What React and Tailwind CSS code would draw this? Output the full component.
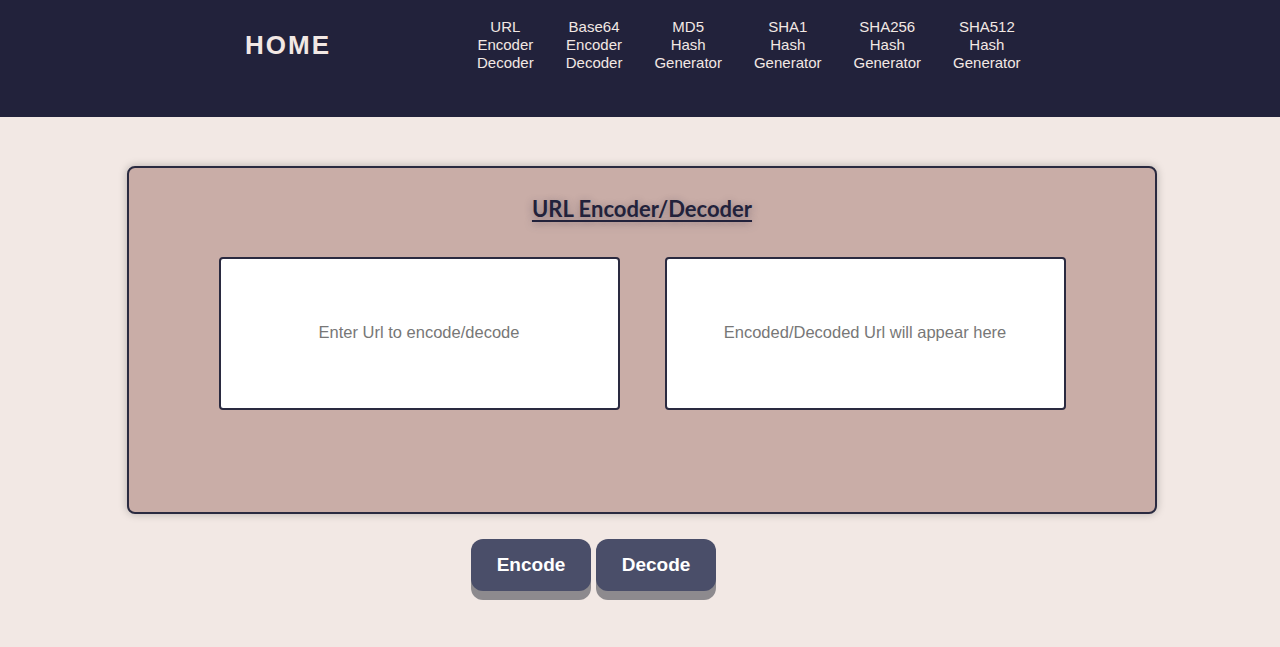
import { useState } from "react";

const links = [
  ["URL", "Encoder", "Decoder"],
  ["Base64", "Encoder", "Decoder"],
  ["MD5", "Hash", "Generator"],
  ["SHA1", "Hash", "Generator"],
  ["SHA256", "Hash", "Generator"],
  ["SHA512", "Hash", "Generator"],
];

export default function App() {
  const [input, setInput] = useState("");
  const [output, setOutput] = useState("");

  const encode = () => setOutput(encodeURIComponent(input));
  const decode = () => {
    try {
      setOutput(decodeURIComponent(input));
    } catch (e) {
      setOutput("Invalid input");
    }
  };

  return (
    <div className="min-h-[647px] bg-[#f2e8e4] font-['Liberation_Sans',Arial,sans-serif]">
      {/* HEADER */}
      <header className="h-[117px] bg-[#22223b] flex items-start pt-[18px]">
        <a className="ml-[245px] text-[26px] leading-[54px] font-bold tracking-[2px] text-[#f2e8e4]">
          HOME
        </a>
        <nav className="ml-[146px] flex gap-[32px]">
          {links.map((l, i) => (
            <a
              key={i}
              className="text-center text-[15px] leading-[18px] text-[#f2e8e4]"
            >
              {l.map((w) => (
                <div key={w}>{w}</div>
              ))}
            </a>
          ))}
        </nav>
      </header>

      {/* CARD */}
      <main className="pt-[49px]">
        <div className="ml-[127px] mr-[123px] h-[348px] bg-[#c9ada7] border-2 border-[#2a2a40] rounded-lg shadow-[0_0_8px_rgba(0,0,0,0.25)]">
          <h1 className="mt-[27px] text-center font-['Lato',sans-serif] font-bold text-[22px] leading-[28px] text-[#22223b] underline underline-offset-[3px] [text-shadow:0_2px_8px_rgba(34,34,59,0.4)]">
            URL Encoder/Decoder
          </h1>
          <div className="mt-[34px] flex justify-center gap-[45px]">
            <textarea
              value={input}
              onChange={(e) => setInput(e.target.value)}
              placeholder="Enter Url to encode/decode"
              className="w-[401px] h-[153px] bg-white border-2 border-[#2a2a40] rounded-[4px] resize-none text-center pt-[63px] px-3 text-[16.5px] leading-[20px] placeholder:text-[#777] outline-none"
            />
            <textarea
              value={output}
              readOnly
              placeholder="Encoded/Decoded Url will appear here"
              className="w-[401px] h-[153px] bg-white border-2 border-[#2a2a40] rounded-[4px] resize-none text-center pt-[63px] px-3 text-[16.5px] leading-[20px] placeholder:text-[#777] outline-none"
            />
          </div>
        </div>

        <div className="mt-[25px] ml-[471px] flex gap-[5px]">
          <button
            onClick={encode}
            className="w-[120px] h-[52px] rounded-xl bg-[#4a4e69] text-white font-bold text-[19px] shadow-[0_9px_0_#8d8a8e]"
          >
            Encode
          </button>
          <button
            onClick={decode}
            className="w-[120px] h-[52px] rounded-xl bg-[#4a4e69] text-white font-bold text-[19px] shadow-[0_9px_0_#8d8a8e]"
          >
            Decode
          </button>
        </div>
      </main>
    </div>
  );
}
